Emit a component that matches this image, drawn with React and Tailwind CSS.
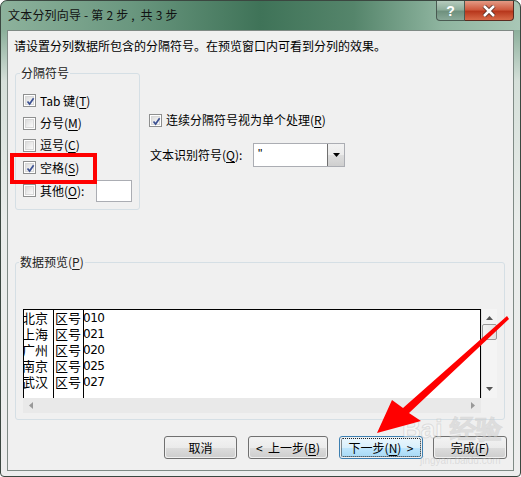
import React from "react";

const font = { fontFamily: '"Noto Sans CJK SC", "Liberation Sans", sans-serif' };

function Check({ checked }) {
  return (
    <div className="w-[13px] h-[13px] shrink-0 border border-[#8e8f8f] bg-white p-px">
      <div className="w-full h-full border border-[#d8d8d8] bg-gradient-to-br from-[#dcdcdc] to-[#fbfbfb] relative">
        {checked && (
          <svg width="9" height="9" viewBox="0 0 9 9" className="absolute left-0 top-0">
            <path d="M1.5 4.5 L3.6 7 L7.6 1.2" fill="none" stroke="#3c5192" strokeWidth="1.7" />
          </svg>
        )}
      </div>
    </div>
  );
}

function U({ children }) {
  return <span className="underline underline-offset-2">{children}</span>;
}

function Btn({ w, focus, children }) {
  return (
    <div
      className={
        "h-[23px] rounded-[3px] border p-px flex " +
        w +
        (focus ? " border-[#3c7fb1]" : " border-[#707070]")
      }
    >
      <div
        className={
          "flex-1 flex items-center justify-center text-[12px] rounded-[2px] whitespace-pre " +
          (focus
            ? "bg-[linear-gradient(180deg,#eaf6fd_0%,#d9f0fc_50%,#bee6fd_51%,#a7d9f5_100%)] outline-1 outline-dotted outline-[#222] -outline-offset-1"
            : "bg-[linear-gradient(180deg,#f2f2f2_0%,#ebebeb_50%,#dddddd_51%,#cfcfcf_100%)]")
        }
      >
        {children}
      </div>
    </div>
  );
}

const rows = [
  ["北京", "010"],
  ["上海", "021"],
  ["广州", "020"],
  ["南京", "025"],
  ["武汉", "027"],
];

export default function App() {
  return (
    <div className="w-[521px] h-[477px] relative overflow-hidden bg-white text-black" style={font}>
      <div className="h-full flex flex-col rounded-t-[7px] rounded-b-[4px] border border-[#3b4740] bg-[linear-gradient(180deg,#6e9a82_0px,#8db09c_30px,#d5dfd9_80px,#e9ecea_220px,#ededed_100%)]">
        {/* title bar */}
        <div className="h-[29px] flex justify-between rounded-t-[7px] bg-[linear-gradient(90deg,#8db29c_0%,#6a977f_25%,#3f7358_50%,#55856b_68%,#8fb5a0_85%,#a9c7b6_100%)]">
          <div className="pl-[7px] pt-[6px] text-[12px] leading-[16px] text-[#111] whitespace-pre tracking-[0.2px]">文本分列向导 - 第 2 步 ,  共 3 步</div>
          <div className="flex items-start pr-[6px]">
            <div className="w-[29px] h-[20px] border border-[#4a5a52] border-t-0 rounded-bl-[4px] bg-[linear-gradient(180deg,#b5cbbd_0%,#8fae9c_45%,#6f917e_55%,#89a998_100%)] flex items-center justify-center text-white font-bold text-[14px] leading-none" style={{ fontFamily: '"Liberation Sans", sans-serif' }}>
              ?
            </div>
            <div className="w-[49px] h-[20px] border border-[#5a2a20] border-t-0 border-l-0 rounded-br-[4px] bg-[linear-gradient(180deg,#e39a85_0%,#cf5b40_45%,#b8381d_55%,#d86a48_100%)] flex items-center justify-center">
              <svg width="14" height="12" viewBox="0 0 14 12">
                <path d="M2 1 L12 11 M12 1 L2 11" stroke="#4d2a22" strokeWidth="4.2" />
                <path d="M2 1 L12 11 M12 1 L2 11" stroke="#fff" strokeWidth="2.6" />
              </svg>
            </div>
          </div>
        </div>

        {/* client area */}
        <div className="mx-[6px] mb-[5px] flex-1 flex flex-col border border-[#7f8a85] bg-[#f0f0f0] text-[12px] leading-[16px]">
          <div className="pt-[7px] pl-[6px]">请设置分列数据所包含的分隔符号。在预览窗口内可看到分列的效果。</div>

          <div className="flex mt-[11px] pl-[7px]">
            <fieldset className="w-[125px] h-[145px] border border-[#d5dfe5] rounded-[3px] pl-[4px]">
              <legend className="px-[1px] leading-[16px] text-[#222]">分隔符号</legend>
              <div className="flex flex-col pt-[8px] pl-[3px]">
                <div className="h-[23px] flex items-center gap-[4px]">
                  <Check checked />
                  <span>Tab 键(<U>T</U>)</span>
                </div>
                <div className="h-[22px] flex items-center gap-[4px]">
                  <Check />
                  <span>分号(<U>M</U>)</span>
                </div>
                <div className="h-[22px] flex items-center gap-[4px]">
                  <Check />
                  <span>逗号(<U>C</U>)</span>
                </div>
                <div className="h-[23px] flex items-center gap-[4px]">
                  <Check checked />
                  <span>空格(<U>S</U>)</span>
                </div>
                <div className="h-[23px] flex items-center gap-[4px]">
                  <Check />
                  <span>其他(<U>O</U>):</span>
                  <div className="ml-[8px] w-[36px] h-[22px] border border-[#abadb3] bg-white" />
                </div>
              </div>
            </fieldset>

            <div className="flex flex-col pl-[9px] pt-[47px]">
              <div className="h-[16px] flex items-center gap-[4px]">
                <Check checked />
                <span>连续分隔符号视为单个处理(<U>R</U>)</span>
              </div>
              <div className="flex items-center mt-[15px] pl-px">
                <span className="w-[103px]">文本识别符号(<U>Q</U>):</span>
                <div className="w-[92px] h-[24px] border border-[#abadb3] bg-white flex">
                  <div className="flex-1 pl-[4px] pt-[2px] text-[12px]" style={{ fontFamily: '"Liberation Sans", sans-serif' }}>"</div>
                  <div className="w-[17px] border-l border-[#707070] bg-[linear-gradient(180deg,#f2f2f2_0%,#ebebeb_50%,#dddddd_51%,#cfcfcf_100%)] flex items-center justify-center">
                    <svg width="7" height="4" viewBox="0 0 7 4">
                      <path d="M0 0 H7 L3.5 4 Z" fill="#000" />
                    </svg>
                  </div>
                </div>
              </div>
            </div>
          </div>

          <fieldset className="ml-[7px] mt-[44px] w-[490px] h-[166px] border border-[#d5dfe5] rounded-[3px] pl-[3px]">
            <legend className="px-[1px] leading-[16px] text-[#222]">数据预览(<U>P</U>)</legend>
            <div className="mt-[39px] ml-[4px] w-[474px] flex flex-col">
              <div className="flex h-[89px]">
                <div className="flex-1 bg-white border border-b-0 border-black flex text-[13px] leading-[16px] overflow-hidden">
                  <div className="w-[30px] border-r border-black">
                    {rows.map((r) => (
                      <div key={r[0]} className="h-[16px] -ml-[2px]">{r[0]}</div>
                    ))}
                  </div>
                  <div className="w-[30px] border-r border-black pl-[1px]">
                    {rows.map((r) => (
                      <div key={r[0]} className="h-[16px]">区号</div>
                    ))}
                  </div>
                  <div className="flex-1 text-[12px]" style={{ fontFamily: '"DejaVu Sans", sans-serif' }}>
                    {rows.map((r) => (
                      <div key={r[0]} className="h-[16px] -ml-px tracking-[-0.5px]">{r[1]}</div>
                    ))}
                  </div>
                </div>
                <div className="w-[16px] bg-[#f4f4f4] border-l border-[#e4e4e4] flex flex-col items-center">
                  <svg width="7" height="4" viewBox="0 0 7 4" className="mt-[7px]">
                    <path d="M0 4 H7 L3.5 0 Z" fill="#555" />
                  </svg>
                  <div className="mt-[4px] w-[15px] h-[16px] rounded-[2px] border border-[#9a9a9a] bg-[linear-gradient(90deg,#f4f4f4,#e2e2e2)]" />
                  <div className="flex-1" />
                  <svg width="7" height="4" viewBox="0 0 7 4" className="mb-[7px]">
                    <path d="M0 0 H7 L3.5 4 Z" fill="#555" />
                  </svg>
                </div>
              </div>
              <div className="h-[15px] flex">
                <div className="flex-1 bg-[#e9e9e9] flex items-center justify-between px-[6px]">
                  <svg width="4" height="7" viewBox="0 0 4 7">
                    <path d="M4 0 V7 L0 3.5 Z" fill="#999" />
                  </svg>
                  <svg width="4" height="7" viewBox="0 0 4 7">
                    <path d="M0 0 V7 L4 3.5 Z" fill="#999" />
                  </svg>
                </div>
                <div className="w-[16px] bg-[#f0f0f0]" />
              </div>
            </div>
          </fieldset>

          <div className="flex justify-end pr-[6px] mt-[16px]">
            <Btn w="w-[73px]">取消</Btn>
            <div className="w-[11px]" />
            <Btn w="w-[80px]">{"<  上一步("}<U>B</U>)</Btn>
            <div className="w-[11px]" />
            <Btn w="w-[84px]" focus>下一步(<U>N</U>){"  >"}</Btn>
            <div className="w-[10px]" />
            <Btn w="w-[74px]">完成(<U>F</U>)</Btn>
          </div>
        </div>
      </div>

      {/* red highlight */}
      <div className="absolute left-[10px] top-[153px] w-[87px] h-[31px] border-[4px] border-[#ff0000]" />

      {/* watermark */}
      <div className="absolute left-[402px] top-[416px] text-[26px] font-bold text-white/40 leading-none pointer-events-none" style={{ fontFamily: '"Liberation Sans", sans-serif', WebkitTextStroke: "1px rgba(150,150,150,0.25)" }}>
        Bai 经验
      </div>
      <div className="absolute left-[420px] top-[456px] text-[10px] text-[#bbb]/40 leading-none pointer-events-none" style={{ fontFamily: '"Liberation Sans", sans-serif' }}>
        jingyan.baidu.com
      </div>

      {/* red arrow */}
      <svg width="521" height="477" className="absolute left-0 top-0 pointer-events-none">
        <polygon points="507,316 509,319 409,413 421,421 377,433 392,400 403,408" fill="#ff0000" />
      </svg>
    </div>
  );
}
